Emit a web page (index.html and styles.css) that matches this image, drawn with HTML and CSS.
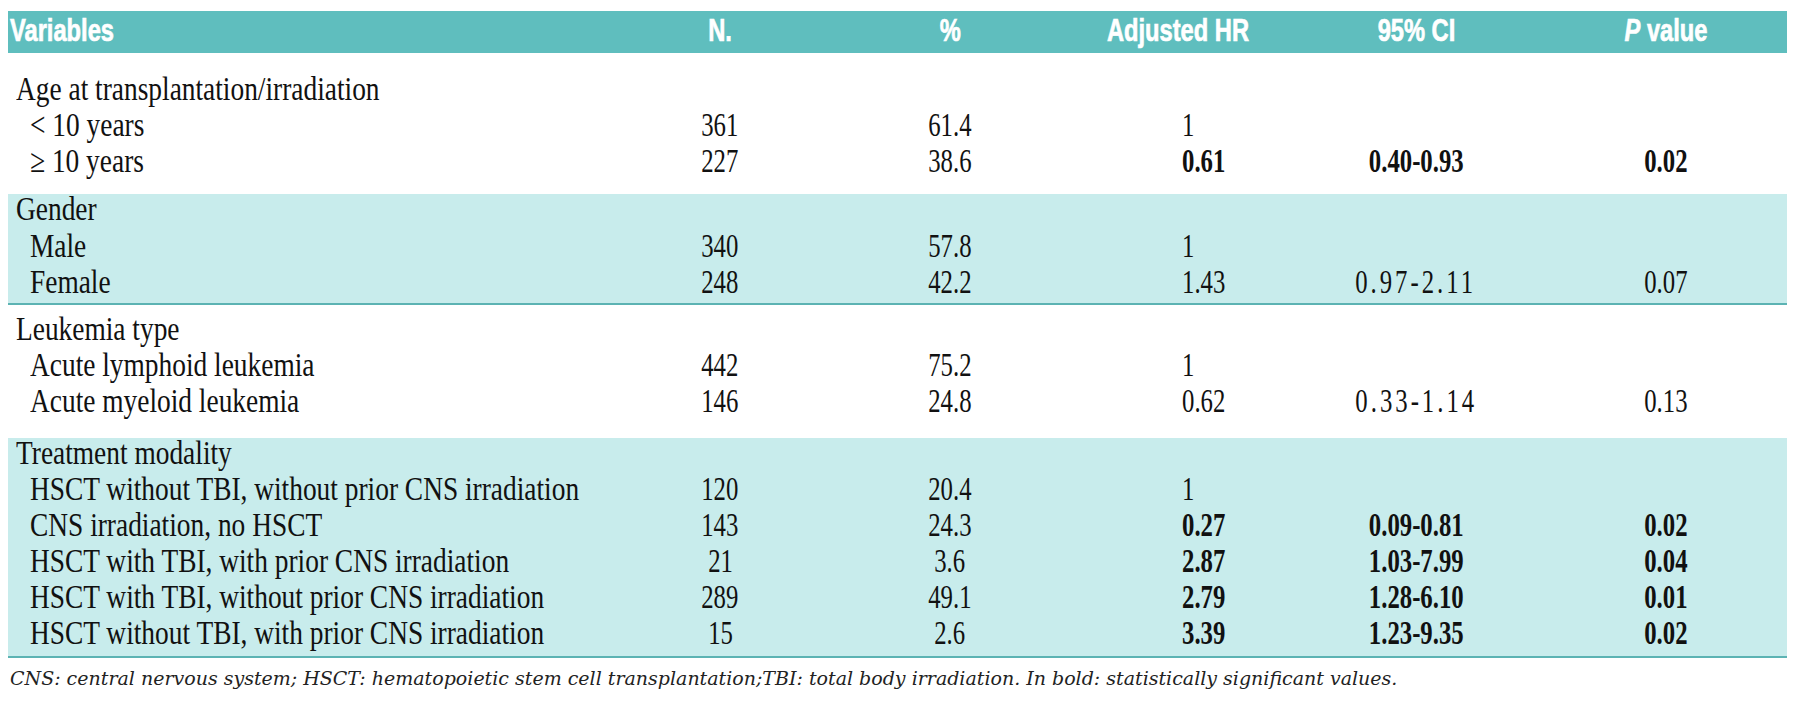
FILE: index.html
```html
<!DOCTYPE html>
<html lang="en">
<head>
<meta charset="utf-8">
<title>Adjusted hazard ratios</title>
<link rel="stylesheet" href="styles.css">
</head>
<body>
<div class="page">
<table class="tbl">
  <colgroup>
    <col class="w-var"><col class="w-n"><col class="w-pct"><col class="w-hr"><col class="w-ci"><col class="w-p">
  </colgroup>
  <thead>
    <tr>
      <th class="c-var"><span class="h">Variables</span></th>
      <th><span class="h">N.</span></th>
      <th><span class="h">%</span></th>
      <th><span class="h">Adjusted HR</span></th>
      <th><span class="h">95% CI</span></th>
      <th class="c-p"><span class="h"><i>P</i> value</span></th>
    </tr>
  </thead>
  <tbody class="g1">
    <tr><td class="lab"><span class="t">Age at transplantation/irradiation</span></td><td></td><td></td><td class="hr"></td><td></td><td class="p"></td></tr>
    <tr><td class="sub"><span class="t">&lt; 10 years</span></td><td><span class="n">361</span></td><td><span class="n">61.4</span></td><td class="hr"><span class="n">1</span></td><td></td><td class="p"></td></tr>
    <tr><td class="sub"><span class="t">≥ 10 years</span></td><td><span class="n">227</span></td><td><span class="n">38.6</span></td><td class="hr"><span class="n b">0.61</span></td><td><span class="n b">0.40-0.93</span></td><td class="p"><span class="n b">0.02</span></td></tr>
  </tbody>
  <tbody class="g2 shade">
    <tr><td class="lab"><span class="t">Gender</span></td><td></td><td></td><td class="hr"></td><td></td><td class="p"></td></tr>
    <tr><td class="sub"><span class="t">Male</span></td><td><span class="n">340</span></td><td><span class="n">57.8</span></td><td class="hr"><span class="n">1</span></td><td></td><td class="p"></td></tr>
    <tr><td class="sub"><span class="t">Female</span></td><td><span class="n">248</span></td><td><span class="n">42.2</span></td><td class="hr"><span class="n">1.43</span></td><td><span class="n sp">0.97-2.11</span></td><td class="p"><span class="n">0.07</span></td></tr>
  </tbody>
  <tbody class="g3">
    <tr><td class="lab"><span class="t">Leukemia type</span></td><td></td><td></td><td class="hr"></td><td></td><td class="p"></td></tr>
    <tr><td class="sub"><span class="t">Acute lymphoid leukemia</span></td><td><span class="n">442</span></td><td><span class="n">75.2</span></td><td class="hr"><span class="n">1</span></td><td></td><td class="p"></td></tr>
    <tr><td class="sub"><span class="t">Acute myeloid leukemia</span></td><td><span class="n">146</span></td><td><span class="n">24.8</span></td><td class="hr"><span class="n">0.62</span></td><td><span class="n sp">0.33-1.14</span></td><td class="p"><span class="n">0.13</span></td></tr>
  </tbody>
  <tbody class="g4 shade">
    <tr><td class="lab"><span class="t">Treatment modality</span></td><td></td><td></td><td class="hr"></td><td></td><td class="p"></td></tr>
    <tr><td class="sub"><span class="t">HSCT without TBI, without prior CNS irradiation</span></td><td><span class="n">120</span></td><td><span class="n">20.4</span></td><td class="hr"><span class="n">1</span></td><td></td><td class="p"></td></tr>
    <tr><td class="sub"><span class="t">CNS irradiation, no HSCT</span></td><td><span class="n">143</span></td><td><span class="n">24.3</span></td><td class="hr"><span class="n b">0.27</span></td><td><span class="n b">0.09-0.81</span></td><td class="p"><span class="n b">0.02</span></td></tr>
    <tr><td class="sub"><span class="t">HSCT with TBI, with prior CNS irradiation</span></td><td><span class="n">21</span></td><td><span class="n">3.6</span></td><td class="hr"><span class="n b">2.87</span></td><td><span class="n b">1.03-7.99</span></td><td class="p"><span class="n b">0.04</span></td></tr>
    <tr><td class="sub"><span class="t">HSCT with TBI, without prior CNS irradiation</span></td><td><span class="n">289</span></td><td><span class="n">49.1</span></td><td class="hr"><span class="n b">2.79</span></td><td><span class="n b">1.28-6.10</span></td><td class="p"><span class="n b">0.01</span></td></tr>
    <tr><td class="sub"><span class="t">HSCT without TBI, with prior CNS irradiation</span></td><td><span class="n">15</span></td><td><span class="n">2.6</span></td><td class="hr"><span class="n b">3.39</span></td><td><span class="n b">1.23-9.35</span></td><td class="p"><span class="n b">0.02</span></td></tr>
  </tbody>
</table>
<p class="note">CNS: central nervous system; HSCT: hematopoietic stem cell transplantation;TBI: total body irradiation. In bold: statistically significant values.</p>
</div>
</body>
</html>
```
FILE: styles.css
```css
body {
  margin: 0;
  background: #ffffff;
}

.page {
  padding: 11px 0 0 8px;
}

.tbl {
  width: 1779px;
  table-layout: fixed;
  border-collapse: separate;
  border-spacing: 0;
  font-family: "Liberation Serif", "Times New Roman", serif;
  font-size: 33px;
  color: #111111;
}

.w-var { width: 612px; }
.w-n { width: 200px; }
.w-pct { width: 260px; }
.w-hr { width: 196px; }
.w-ci { width: 280px; }
.w-p { width: 231px; }

th {
  background: #5fbebe;
  color: #ffffff;
  font-family: "Liberation Sans", Arial, sans-serif;
  font-weight: bold;
  font-size: 32px;
  line-height: 38px;
  padding: 0 0 4px 0;
  text-align: center;
  white-space: nowrap;
  -webkit-text-stroke: 0.7px #ffffff;
}

th.c-var {
  text-align: left;
  padding-left: 2px;
}

th.c-p {
  padding-right: 11px;
}

.h {
  display: inline-block;
  transform: scaleX(0.74);
}

th.c-var .h {
  transform-origin: 0 50%;
}

td {
  line-height: 30px;
  padding: 6px 0 0 0;
  white-space: nowrap;
  text-align: center;
}

td.lab {
  text-align: left;
  padding-left: 8px;
}

td.sub {
  text-align: left;
  padding-left: 22px;
}

td.hr {
  text-align: left;
  padding-left: 102px;
}

td.p {
  padding-right: 11px;
}

.t {
  display: inline-block;
  transform: scaleX(0.83);
  transform-origin: 0 50%;
}

.n {
  display: inline-block;
  transform: scaleX(0.75);
}

td.hr .n {
  transform-origin: 0 50%;
}

.b {
  font-weight: bold;
}

.sp {
  letter-spacing: 4px;
}

.shade td {
  background: #c8ecec;
}

.g1 tr:first-child td { padding-top: 21px; }
.g1 tr:last-child td { padding-bottom: 18px; }

.g2 tr:first-child td { padding-top: 0; }
.g2 tr:nth-child(2) td { padding-top: 7px; }
.g2 tr:last-child td {
  padding-bottom: 6px;
  border-bottom: 2px solid #5cb3b3;
}

.g3 tr:first-child td { padding-top: 9px; }
.g3 tr:last-child td { padding-bottom: 22px; }

.g4 tr:first-child td { padding-top: 0; }
.g4 tr:last-child td {
  padding-bottom: 8px;
  border-bottom: 2px solid #5cb3b3;
}

.note {
  margin: 8px 0 0 2px;
  font-family: "DejaVu Serif", serif;
  font-style: italic;
  font-size: 19px;
  line-height: 24px;
  color: #222222;
}
```
